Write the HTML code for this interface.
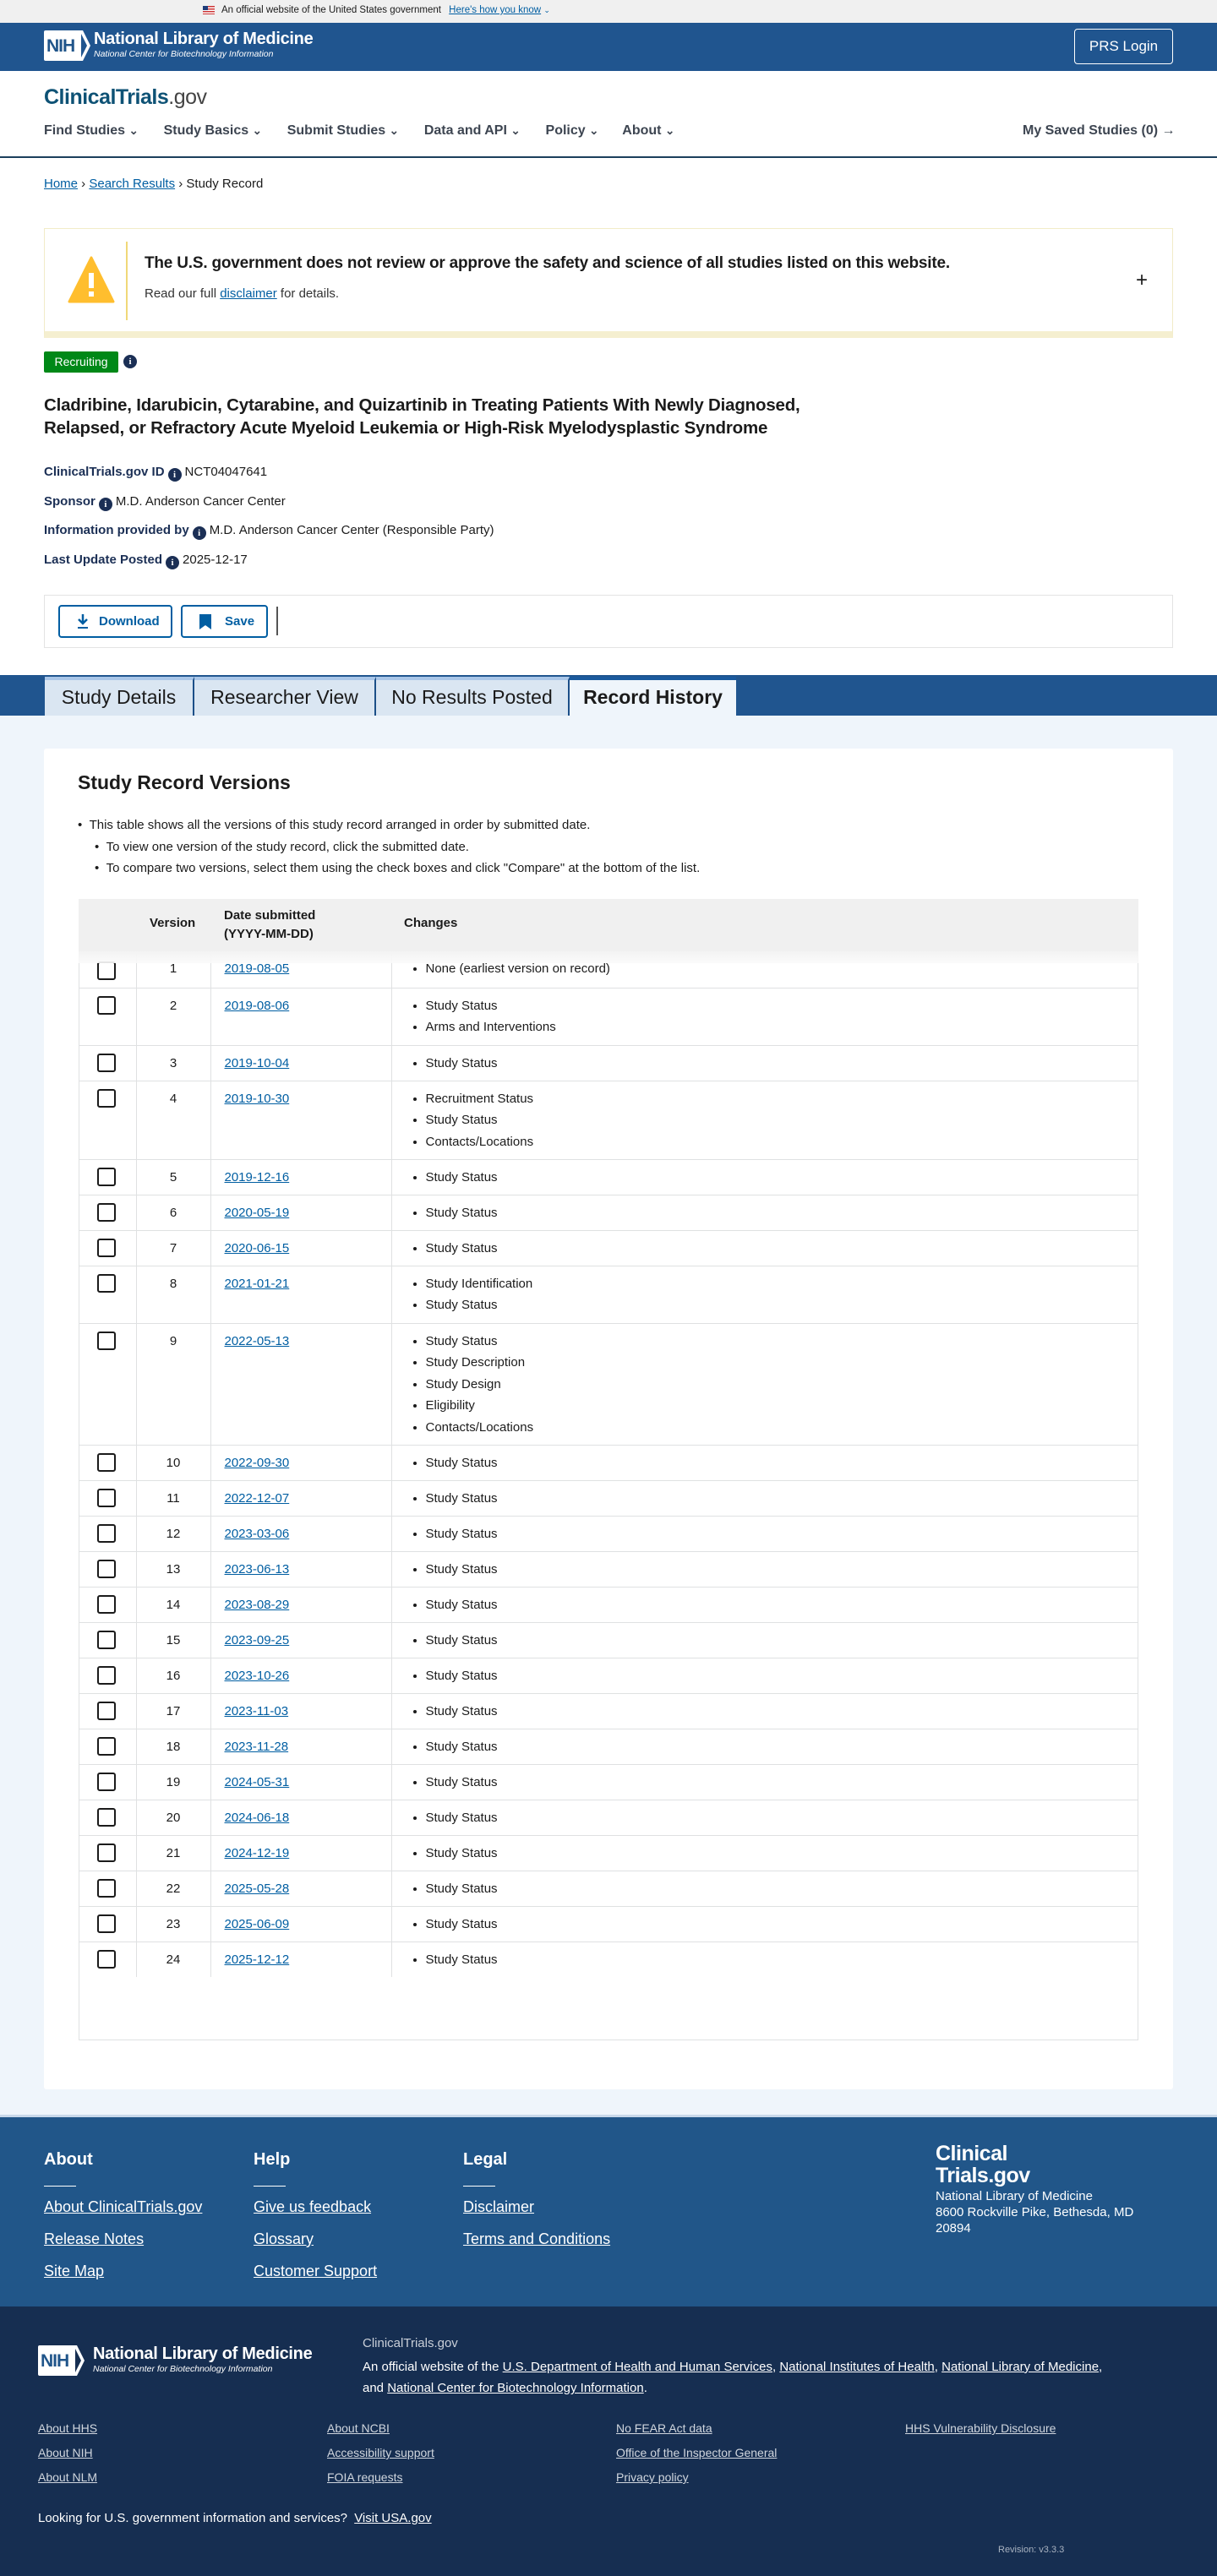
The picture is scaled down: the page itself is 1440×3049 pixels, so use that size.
<!DOCTYPE html>
<html><head><meta charset="utf-8"><style>
*{box-sizing:border-box;margin:0;padding:0}
body{width:1440px;height:3049px;position:relative;font-family:"Liberation Sans",sans-serif;color:#1b1b1b;background:#fff;overflow:hidden}
.abs{position:absolute}
a{color:#005ea2;text-decoration:underline}
.nihbox{position:absolute;width:56px;height:36px}
.nihbox .b{position:absolute;left:0;top:0;width:44px;height:36px;background:#fff;border-radius:2px 0 0 2px}
.nihbox .t{position:absolute;left:3px;top:7px;font:bold 21px "Liberation Sans",sans-serif;color:#20558a;letter-spacing:-1px}
.tab{position:absolute;top:801px;height:46px;background:#dae6f2;border-top:4px solid #a9c6e8;border-right:2px solid #1c4f88;font-size:23px;line-height:40px;text-align:center;color:#1b1b1b}
table{border-collapse:collapse;position:absolute;left:93px;width:1254px;font-size:15px}
td{border-bottom:1px solid #dfe1e2;vertical-align:top;padding:8px 0 0 0;line-height:25.5px}
td.cb{width:68px;border-right:1px solid #dfe1e2}
td.v{width:88px;text-align:center;border-right:1px solid #dfe1e2}
td.d{width:214px;padding-left:16px;border-right:1px solid #dfe1e2}
td.c ul{padding-left:40px;list-style:disc}
.box{width:22px;height:22px;border:2px solid #1b1b1b;border-radius:3px;margin:1px 0 0 22px;background:#fff}
tr.first td{padding-top:20px}
tr.first .box{margin-top:4px}
.fl a{color:#fff;font-size:18px;position:absolute}
.fd a{color:#d0d6de;font-size:14px;position:absolute}
.info{display:inline-block;width:16px;height:16px;border-radius:50%;background:#1b2f55;color:#fff;font:bold 11px/16px "Liberation Serif",serif;text-align:center;vertical-align:-2px;margin:0 4px}
</style></head><body>
<!-- gov banner -->
<div class="abs" style="left:0;top:0;width:1440px;height:27px;background:#f0f0f0"></div>
<div class="abs" style="left:240px;top:7px;width:14px;height:10px;background:repeating-linear-gradient(#c33 0 1.5px,#fff 1.5px 3px)"><div style="width:6px;height:5px;background:#1f3d7a"></div></div>
<div class="abs" style="left:262px;top:6px;font-size:11.5px;color:#1b1b1b">An official website of the United States government <a style="margin-left:6px;color:#005ea2">Here's how you know</a> <span style="color:#005ea2;font-size:9px">⌄</span></div>
<!-- header -->
<div class="abs" style="left:0;top:27px;width:1440px;height:57px;background:#20558f"></div>
<div class="nihbox" style="left:52px;top:36px"><div class="b"></div><div class="t">NIH</div>
<svg style="position:absolute;left:42px;top:0" width="14" height="36"><path d="M0 0 L4 0 L13 18 L4 36 L0 36 L9 18Z" fill="#fff"/></svg></div>
<div class="abs" style="left:111px;top:35px;color:#fff;font-size:20px;font-weight:bold;letter-spacing:-0.3px">National Library of Medicine</div>
<div class="abs" style="left:111px;top:58px;color:#fff;font-size:10.5px;font-style:italic">National Center for Biotechnology Information</div>
<div class="abs" style="left:1271px;top:34px;width:117px;height:42px;border:1px solid #fff;border-radius:4px;color:#fff;font-size:17px;text-align:center;line-height:40px">PRS Login</div>
<!-- site logo / nav -->
<div class="abs" style="left:52px;top:101px;font-size:25px;font-weight:bold;color:#0e5275;letter-spacing:-0.5px">ClinicalTrials<span style="font-weight:normal;color:#444">.gov</span></div>
<div class="abs" style="left:52px;top:146px;font-size:16px;font-weight:bold;color:#3d4551;word-spacing:0">
<span>Find Studies <small>⌄</small></span><span style="margin-left:30px">Study Basics <small>⌄</small></span><span style="margin-left:30px">Submit Studies <small>⌄</small></span><span style="margin-left:30px">Data and API <small>⌄</small></span><span style="margin-left:30px">Policy <small>⌄</small></span><span style="margin-left:28px">About <small>⌄</small></span></div>
<div class="abs" style="left:1210px;top:146px;font-size:16px;font-weight:bold;color:#3d4551">My Saved Studies (0) →</div>
<div class="abs" style="left:0;top:185px;width:1440px;height:2px;background:#1c3f5c"></div>
<!-- breadcrumb -->
<div class="abs" style="left:52px;top:209px;font-size:15px"><a>Home</a> › <a>Search Results</a> › Study Record</div>
<!-- alert -->
<div class="abs" style="left:52px;top:270px;width:1336px;height:130px;border:1px solid #f2ecc8;border-bottom:8px solid #f5efd0;background:#fff"></div>
<svg class="abs" style="left:80px;top:303px" width="56" height="56"><path d="M28 2 L54 54 L2 54Z" fill="#ffbe2e" stroke="#ffbe2e" stroke-width="3" stroke-linejoin="round"/><rect x="25" y="20" width="6" height="18" fill="#fff"/><rect x="25" y="42" width="6" height="6" fill="#fff"/></svg>
<div class="abs" style="left:149px;top:286px;width:2px;height:93px;background:#f0d878"></div>
<div class="abs" style="left:171px;top:301px;font-size:19px;font-weight:bold;letter-spacing:-0.2px">The U.S. government does not review or approve the safety and science of all studies listed on this website.</div>
<div class="abs" style="left:171px;top:339px;font-size:15px;color:#333">Read our full <a>disclaimer</a> for details.</div>
<div class="abs" style="left:1344px;top:318px;font-size:24px">+</div>
<!-- badge -->
<div class="abs" style="left:52px;top:416px;width:88px;height:25px;background:#008817;color:#fff;font-size:14px;line-height:25px;text-align:center;border-radius:2px">Recruiting</div>
<span class="abs info" style="left:142px;top:420px">i</span>
<div class="abs" style="left:52px;top:466px;font-size:20.5px;font-weight:bold;line-height:27px;color:#1b1b1b;letter-spacing:-0.2px">Cladribine, Idarubicin, Cytarabine, and Quizartinib in Treating Patients With Newly Diagnosed,<br>Relapsed, or Refractory Acute Myeloid Leukemia or High-Risk Myelodysplastic Syndrome</div>
<div class="abs" style="left:52px;top:542px;font-size:15px;line-height:34.5px">
<div><b style="color:#1b2f55">ClinicalTrials.gov ID</b><span class="info">i</span>NCT04047641</div>
<div><b style="color:#1b2f55">Sponsor</b><span class="info">i</span>M.D. Anderson Cancer Center</div>
<div><b style="color:#1b2f55">Information provided by</b><span class="info">i</span>M.D. Anderson Cancer Center (Responsible Party)</div>
<div><b style="color:#1b2f55">Last Update Posted</b><span class="info">i</span>2025-12-17</div></div>
<!-- button bar -->
<div class="abs" style="left:52px;top:704px;width:1336px;height:63px;border:1px solid #e3e3e3;background:#fff"></div>
<div class="abs" style="left:69px;top:716px;width:135px;height:39px;border:2px solid #005ea2;border-radius:4px;color:#005ea2;font-size:15px;font-weight:bold;line-height:35px;padding-left:46px">Download
<svg style="position:absolute;left:20px;top:9px" width="14" height="18"><path d="M7 0 V10 M2 6 L7 11 L12 6" stroke="#005ea2" stroke-width="2.5" fill="none"/><rect x="1" y="15" width="12" height="2" fill="#005ea2"/></svg></div>
<div class="abs" style="left:214px;top:716px;width:103px;height:39px;border:2px solid #005ea2;border-radius:4px;color:#005ea2;font-size:15px;font-weight:bold;line-height:35px;padding-left:50px">Save
<svg style="position:absolute;left:20px;top:9px" width="14" height="18"><path d="M0 0 H14 V18 L7 13 L0 18Z" fill="#005ea2"/></svg></div>
<div class="abs" style="left:327px;top:718px;width:2px;height:34px;background:#555"></div>
<!-- tabs -->
<div class="abs" style="left:0;top:799px;width:1440px;height:48px;background:#20558f"></div>
<div class="abs" style="left:0;top:847px;width:1440px;height:1658px;background:#eff5fb"></div>
<div class="tab" style="left:53px;width:177px">Study Details</div>
<div class="tab" style="left:230px;width:215px">Researcher View</div>
<div class="tab" style="left:445px;width:229px">No Results Posted</div>
<div class="tab" style="left:674px;width:197px;background:#eff5fb;border-top-color:#1a5a9e;border-right:none;font-weight:bold;height:48px">Record History</div>
<!-- card -->
<div class="abs" style="left:52px;top:886px;width:1336px;height:1587px;background:#fff;border-radius:3px"></div>
<div class="abs" style="left:92px;top:913px;font-size:23px;font-weight:bold">Study Record Versions</div>
<div class="abs" style="left:92px;top:964px;font-size:15px;line-height:25.5px">
<div>•&nbsp;&nbsp;This table shows all the versions of this study record arranged in order by submitted date.</div>
<div style="padding-left:20px">•&nbsp;&nbsp;To view one version of the study record, click the submitted date.</div>
<div style="padding-left:20px">•&nbsp;&nbsp;To compare two versions, select them using the check boxes and click "Compare" at the bottom of the list.</div></div>
<div class="abs" style="left:93px;top:1064px;width:1254px;height:1351px;border:1px solid #dfe1e2"></div>
<div class="abs" style="left:93px;top:1064px;width:1254px;height:62px;background:#f0f0f0;font-size:15px;font-weight:bold">
<div class="abs" style="left:84px;top:20px">Version</div>
<div class="abs" style="left:172px;top:9px;line-height:22px">Date submitted<br>(YYYY-MM-DD)</div>
<div class="abs" style="left:385px;top:20px">Changes</div></div>
<div class="abs" style="left:93px;top:1126px;width:1254px;height:1214px;overflow:hidden">
<table style="left:0;top:-12px">
<tr class="first" style="height:55px"><td class="cb"><div class="box"></div></td><td class="v">1</td><td class="d"><a>2019-08-05</a></td><td class="c"><ul><li>None (earliest version on record)</li></ul></td></tr>
<tr style="height:68px"><td class="cb"><div class="box"></div></td><td class="v">2</td><td class="d"><a>2019-08-06</a></td><td class="c"><ul><li>Study Status</li><li>Arms and Interventions</li></ul></td></tr>
<tr style="height:42px"><td class="cb"><div class="box"></div></td><td class="v">3</td><td class="d"><a>2019-10-04</a></td><td class="c"><ul><li>Study Status</li></ul></td></tr>
<tr style="height:93px"><td class="cb"><div class="box"></div></td><td class="v">4</td><td class="d"><a>2019-10-30</a></td><td class="c"><ul><li>Recruitment Status</li><li>Study Status</li><li>Contacts/Locations</li></ul></td></tr>
<tr style="height:42px"><td class="cb"><div class="box"></div></td><td class="v">5</td><td class="d"><a>2019-12-16</a></td><td class="c"><ul><li>Study Status</li></ul></td></tr>
<tr style="height:42px"><td class="cb"><div class="box"></div></td><td class="v">6</td><td class="d"><a>2020-05-19</a></td><td class="c"><ul><li>Study Status</li></ul></td></tr>
<tr style="height:42px"><td class="cb"><div class="box"></div></td><td class="v">7</td><td class="d"><a>2020-06-15</a></td><td class="c"><ul><li>Study Status</li></ul></td></tr>
<tr style="height:68px"><td class="cb"><div class="box"></div></td><td class="v">8</td><td class="d"><a>2021-01-21</a></td><td class="c"><ul><li>Study Identification</li><li>Study Status</li></ul></td></tr>
<tr style="height:144px"><td class="cb"><div class="box"></div></td><td class="v">9</td><td class="d"><a>2022-05-13</a></td><td class="c"><ul><li>Study Status</li><li>Study Description</li><li>Study Design</li><li>Eligibility</li><li>Contacts/Locations</li></ul></td></tr>
<tr style="height:42px"><td class="cb"><div class="box"></div></td><td class="v">10</td><td class="d"><a>2022-09-30</a></td><td class="c"><ul><li>Study Status</li></ul></td></tr>
<tr style="height:42px"><td class="cb"><div class="box"></div></td><td class="v">11</td><td class="d"><a>2022-12-07</a></td><td class="c"><ul><li>Study Status</li></ul></td></tr>
<tr style="height:42px"><td class="cb"><div class="box"></div></td><td class="v">12</td><td class="d"><a>2023-03-06</a></td><td class="c"><ul><li>Study Status</li></ul></td></tr>
<tr style="height:42px"><td class="cb"><div class="box"></div></td><td class="v">13</td><td class="d"><a>2023-06-13</a></td><td class="c"><ul><li>Study Status</li></ul></td></tr>
<tr style="height:42px"><td class="cb"><div class="box"></div></td><td class="v">14</td><td class="d"><a>2023-08-29</a></td><td class="c"><ul><li>Study Status</li></ul></td></tr>
<tr style="height:42px"><td class="cb"><div class="box"></div></td><td class="v">15</td><td class="d"><a>2023-09-25</a></td><td class="c"><ul><li>Study Status</li></ul></td></tr>
<tr style="height:42px"><td class="cb"><div class="box"></div></td><td class="v">16</td><td class="d"><a>2023-10-26</a></td><td class="c"><ul><li>Study Status</li></ul></td></tr>
<tr style="height:42px"><td class="cb"><div class="box"></div></td><td class="v">17</td><td class="d"><a>2023-11-03</a></td><td class="c"><ul><li>Study Status</li></ul></td></tr>
<tr style="height:42px"><td class="cb"><div class="box"></div></td><td class="v">18</td><td class="d"><a>2023-11-28</a></td><td class="c"><ul><li>Study Status</li></ul></td></tr>
<tr style="height:42px"><td class="cb"><div class="box"></div></td><td class="v">19</td><td class="d"><a>2024-05-31</a></td><td class="c"><ul><li>Study Status</li></ul></td></tr>
<tr style="height:42px"><td class="cb"><div class="box"></div></td><td class="v">20</td><td class="d"><a>2024-06-18</a></td><td class="c"><ul><li>Study Status</li></ul></td></tr>
<tr style="height:42px"><td class="cb"><div class="box"></div></td><td class="v">21</td><td class="d"><a>2024-12-19</a></td><td class="c"><ul><li>Study Status</li></ul></td></tr>
<tr style="height:42px"><td class="cb"><div class="box"></div></td><td class="v">22</td><td class="d"><a>2025-05-28</a></td><td class="c"><ul><li>Study Status</li></ul></td></tr>
<tr style="height:42px"><td class="cb"><div class="box"></div></td><td class="v">23</td><td class="d"><a>2025-06-09</a></td><td class="c"><ul><li>Study Status</li></ul></td></tr>
<tr style="height:42px"><td class="cb"><div class="box"></div></td><td class="v">24</td><td class="d"><a>2025-12-12</a></td><td class="c"><ul><li>Study Status</li></ul></td></tr>
</table>
<div class="abs" style="left:0;top:0;width:1254px;height:14px;background:linear-gradient(#f3f3f3,rgba(250,250,250,0.9))"></div>
</div>
<!-- footer top -->
<div class="abs" style="left:0;top:2503px;width:1440px;height:3px;background:#c8d8ea"></div>
<div class="abs fl" style="left:0;top:2506px;width:1440px;height:224px;background:#215689;color:#fff">
<div class="abs" style="left:52px;top:39px;font-size:20px;font-weight:bold">About</div>
<div class="abs" style="left:300px;top:39px;font-size:20px;font-weight:bold">Help</div>
<div class="abs" style="left:548px;top:39px;font-size:20px;font-weight:bold">Legal</div>
<div class="abs" style="left:52px;top:81px;width:38px;height:1px;background:#fff"></div>
<div class="abs" style="left:300px;top:81px;width:38px;height:1px;background:#fff"></div>
<div class="abs" style="left:548px;top:81px;width:38px;height:1px;background:#fff"></div>
<a style="left:52px;top:96px">About ClinicalTrials.gov</a><a style="left:52px;top:134px">Release Notes</a><a style="left:52px;top:172px">Site Map</a>
<a style="left:300px;top:96px">Give us feedback</a><a style="left:300px;top:134px">Glossary</a><a style="left:300px;top:172px">Customer Support</a>
<a style="left:548px;top:96px">Disclaimer</a><a style="left:548px;top:134px">Terms and Conditions</a>
<div class="abs" style="left:1107px;top:30px;font-size:25px;font-weight:bold;line-height:26px;letter-spacing:-0.5px">Clinical<br>Trials.gov</div>
<div class="abs" style="left:1107px;top:84px;font-size:15px;line-height:19px">National Library of Medicine<br>8600 Rockville Pike, Bethesda, MD<br>20894</div>
</div>
<!-- footer bottom -->
<div class="abs fd" style="left:0;top:2730px;width:1440px;height:319px;background:#162e51;color:#fff">
<div class="nihbox" style="left:45px;top:46px"><div class="b"></div><div class="t">NIH</div>
<svg style="position:absolute;left:42px;top:0" width="14" height="36"><path d="M0 0 L4 0 L13 18 L4 36 L0 36 L9 18Z" fill="#fff"/></svg></div>
<div class="abs" style="left:110px;top:45px;font-size:20px;font-weight:bold;letter-spacing:-0.3px">National Library of Medicine</div>
<div class="abs" style="left:110px;top:68px;font-size:10.5px;font-style:italic">National Center for Biotechnology Information</div>
<div class="abs" style="left:429px;top:35px;font-size:15px;color:#c9cfd8">ClinicalTrials.gov</div>
<div class="abs" style="left:429px;top:59px;font-size:15px;line-height:25px;color:#fff">An official website of the <a style="position:static;color:#fff;font-size:15px">U.S. Department of Health and Human Services</a>, <a style="position:static;color:#fff;font-size:15px">National Institutes of Health</a>, <a style="position:static;color:#fff;font-size:15px">National Library of Medicine</a>,<br>and <a style="position:static;color:#fff;font-size:15px">National Center for Biotechnology Information</a>.</div>
<a style="left:45px;top:136px">About HHS</a><a style="left:45px;top:165px">About NIH</a><a style="left:45px;top:194px">About NLM</a>
<a style="left:387px;top:136px">About NCBI</a><a style="left:387px;top:165px">Accessibility support</a><a style="left:387px;top:194px">FOIA requests</a>
<a style="left:729px;top:136px">No FEAR Act data</a><a style="left:729px;top:165px">Office of the Inspector General</a><a style="left:729px;top:194px">Privacy policy</a>
<a style="left:1071px;top:136px">HHS Vulnerability Disclosure</a>
<div class="abs" style="left:45px;top:242px;font-size:15px;color:#fff">Looking for U.S. government information and services? <a style="position:static;color:#fff;font-size:15px;margin-left:4px">Visit USA.gov</a></div>
<div class="abs" style="left:1181px;top:282px;font-size:11px;color:#a9b3c1">Revision: v3.3.3</div>
</div>
</body></html>
